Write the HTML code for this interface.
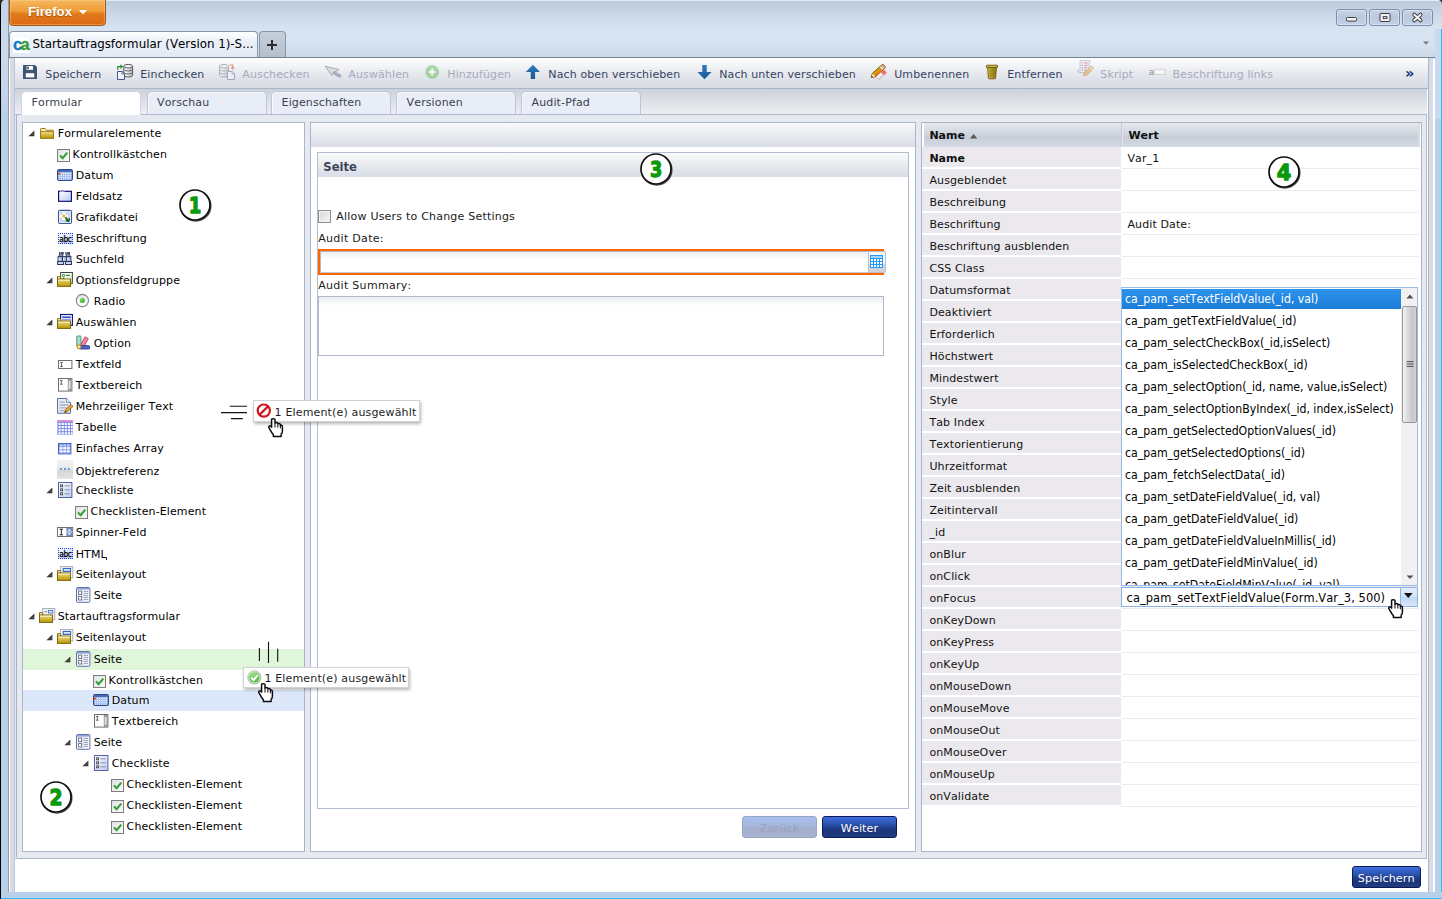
<!DOCTYPE html><html lang="de"><head><meta charset="utf-8"><title>Startauftragsformular (Version 1)</title><style>
*{box-sizing:border-box;margin:0;padding:0}
html,body{width:1442px;height:899px;overflow:hidden;background:#fff}
body{position:relative;font-family:"DejaVu Sans","Liberation Sans",sans-serif;font-size:11px;letter-spacing:.12px;font-kerning:none;color:#000;line-height:13px}
.a{position:absolute}
svg{display:block;overflow:visible}
/* window chrome */
#title{left:0;top:0;width:1442px;height:57px;background:linear-gradient(#e4e9f2 0,#e4e9f2 1px,#bccbdc 1px,#c2d0e0 7px,#d6e4f2 28px,#d6e4f2 44px,#cbd8e6 57px)}
#lb{left:0;top:0;width:9px;height:899px;background:linear-gradient(90deg,#000 0,#000 1.2px,#b9d0ea 1.2px,#b9d0ea 8.2px,#999 8.2px)}
#lbt{left:1px;top:0;width:7px;height:120px;background:linear-gradient(#c2d3e8,#cbdbee 45%,#b9d0ea)}
#rb{left:1434.7px;top:29px;width:7.3px;height:870px;background:linear-gradient(90deg,#b9d0ea 0,#b9d0ea 6.3px,#2bc0f0 6.3px)}
#rbt{left:1434.7px;top:29px;width:6.3px;height:90px;background:#c8daf0}
#bb{left:1.2px;top:891.8px;width:1441px;height:7.2px;background:linear-gradient(#b9d0ea 0,#b9d0ea 6px,#2bc0f0 6px)}
#ffbtn{left:9px;top:-1px;width:97px;height:26.5px;border:1px solid #a5561a;border-radius:0 0 4px 4px;background:linear-gradient(#f6b860 0,#ee9a35 45%,#e17a1c 55%,#dc6a16 100%);box-shadow:inset 0 0 0 1px rgba(255,220,160,.35)}
#fftxt{left:28px;top:3px;font-family:"Liberation Sans","DejaVu Sans",sans-serif;font-weight:bold;font-size:13.2px;line-height:18px;color:#fff;letter-spacing:0;text-shadow:0 1px 1px rgba(120,50,0,.6)}
#btab{left:9px;top:30.5px;width:249px;height:27.5px;border:1px solid #8a96a6;border-bottom:none;border-radius:4px 4px 0 0;background:linear-gradient(#fdfeff,#e9eff8 40%,#e3eaf5)}
#btabt{left:32.5px;top:36px;font-size:11.85px;line-height:16px;letter-spacing:0;white-space:pre;color:#000}
#ntab{left:258.7px;top:30.5px;width:27.3px;height:27px;border:1px solid #8a96a6;border-bottom:none;border-radius:4px 4px 0 0;background:linear-gradient(#c6d0dc,#b3becb)}
#tline{left:9px;top:57px;width:1426px;height:2px;background:linear-gradient(#79838f 0,#79838f 1px,#b9c1cc 1px)}
.wb{top:9px;height:17px;width:31px;border:1px solid #7f8dad;border-radius:3px;background:linear-gradient(#c6d3e4,#b9c8de 50%,#c4d2e6);box-shadow:inset 0 0 0 1px rgba(255,255,255,.35)}
/* page */
#page{left:8.8px;top:58px;width:1426px;height:834px;background:#fff}
#lstrip{left:10px;top:58px;width:4.8px;height:834px;background:linear-gradient(90deg,#d8dde8,#d3d9e5 80%,#aab4c8)}
#rstrip{left:1427.6px;top:58px;width:6.6px;height:834px;background:linear-gradient(90deg,#aeb6c6 0,#aeb6c6 .8px,#d5dbe6 .8px,#d8dde8 5.4px,#fff 5.4px,#fff 6px,#a4a4a4 6px)}
#tb{left:14.5px;top:58px;width:1413.5px;height:30.5px;background:linear-gradient(#fff 0,#f7f8fa 15%,#e9ebf0 45%,#dee1e8 75%,#d9dce4 100%);border-bottom:1px solid #a9b7cc}
.ti{top:68px;white-space:pre;color:#35435f;line-height:14px}
.ti.d{color:#a8aabd}
#ts{left:14.5px;top:89px;width:1412.5px;height:26px;background:linear-gradient(#cdd1da,#dcdfe6 45%,#e9ebef 90%,#eceef2);border-bottom:1px solid #aebacd}
.tab{top:91px;width:120px;height:23px;border:1px solid #bcc6d8;border-bottom:none;border-radius:5px 5px 0 0;background:#e9edf7;color:#3a3f4d;padding:4px 0 0 9.6px;line-height:14px;box-shadow:inset 1px 1px 0 #f6f8fc}
.tab.on{background:#fff;height:24px;border-color:#cfd6e3;box-shadow:none}
#main{left:14.5px;top:115px;width:1412.5px;height:743.5px;background:#e6e9ef;border-left:1.8px solid #dfe6f5;border-right:1px solid #b3bccb;border-bottom:1.5px solid #b0b6c0}
#mainl{left:16.3px;top:115px;width:.8px;height:742px;background:#a8b2c4}
.pnl{background:#fff;border:1px solid #a9b5c9}
.hd{background:linear-gradient(#fbfbfc,#e9ebf0 45%,#d9dde6);}

.tr{white-space:pre;line-height:23px;height:23px;color:#000;letter-spacing:.12px}
.fl{white-space:pre;line-height:14px;color:#1a1a1a}
.btn{border:1px solid #0b1c54;border-radius:3px;background:linear-gradient(#3c6ddc 0,#2f58b8 30%,#213f8c 55%,#1c3578 70%,#213c84 100%);color:#fff;text-align:center;line-height:23px;font-size:11.2px;letter-spacing:.1px}
.gh{font-weight:bold;line-height:14px;color:#111;font-size:11px;letter-spacing:0}
.gc{line-height:14px;white-space:pre;color:#111}
.gc.b{font-weight:bold;letter-spacing:0}
#dd{left:1121.4px;top:286.6px;width:296.6px;height:299px;border:1px solid #98bbea;background:#fff;overflow:hidden}
#dd>div{position:absolute}
.do{left:2.6px;height:22px;line-height:22px;white-space:pre;font-family:"DejaVu Sans Condensed","Liberation Sans","DejaVu Sans",sans-serif;font-size:12.2px;letter-spacing:0;color:#000}
.do.s{color:#fff}

.tip{background:#fff;border:1px solid #d2d2d2;box-shadow:1px 2px 3px rgba(0,0,0,.28)}
.tipt{white-space:pre;line-height:14px;color:#1d1d28;font-size:11px;letter-spacing:.16px}
</style></head><body>

<svg width="0" height="0" style="position:absolute">
<defs>
<linearGradient id="gFold" x1="0" y1="0" x2="0" y2="1"><stop offset="0" stop-color="#f3e7a4"/><stop offset=".35" stop-color="#dcc350"/><stop offset="1" stop-color="#b8960c"/></linearGradient>
<linearGradient id="gBlu" x1="0" y1="0" x2="1" y2="1"><stop offset="0" stop-color="#ffffff"/><stop offset="1" stop-color="#bccaf6"/></linearGradient>
<linearGradient id="gGry" x1="0" y1="0" x2="1" y2="1"><stop offset="0" stop-color="#dfe1e4"/><stop offset="1" stop-color="#fbfbfb"/></linearGradient>
<linearGradient id="gObj" x1="0" y1="0" x2="0" y2="1"><stop offset="0" stop-color="#f2f2f2"/><stop offset=".48" stop-color="#e9e9e9"/><stop offset=".52" stop-color="#d6d6d6"/><stop offset="1" stop-color="#e2e2e2"/></linearGradient>
<linearGradient id="gRad" x1="0" y1="0" x2="0" y2="1"><stop offset="0" stop-color="#e4e4e4"/><stop offset="1" stop-color="#ffffff"/></linearGradient>
<symbol id="arr" viewBox="0 0 7 7"><path d="M6.4 .5V6.2H.4Z" fill="#363636"/><path d="M5.3 3.6V5.1H3.7Z" fill="#6a6a6a"/></symbol>
<symbol id="folder" viewBox="0 0 17 21"><path d="M1.5 7.2Q1.5 6.5 2.2 6.5H6.2L7.5 8.2H13.8Q14.5 8.2 14.5 8.9V16.3H1.5Z" fill="#f6ecb4" stroke="#9c7d14" stroke-width="1"/><path d="M1.5 9.6H14.5V16.3H1.5Z" fill="url(#gFold)" stroke="#9c7d14" stroke-width="1"/></symbol>
<symbol id="fold2" viewBox="0 0 17 21"><path d="M.5 7.6H3.6V10.4H.5Z" fill="#f8f0c4" stroke="#8a7008"/><rect x=".5" y="10" width="13" height="7.4" fill="url(#gFold)" stroke="#7e6604"/><path d="M1.2 11.2H12.8" stroke="#fbf3c8" stroke-width="1"/></symbol>
<symbol id="chk" viewBox="0 0 17 21"><rect x=".5" y="6.5" width="12" height="12" fill="url(#gGry)" stroke="#7d7d7d"/><path d="M3 12.3L5.6 15.2L10.3 9.6" fill="none" stroke="#2e9e2e" stroke-width="2"/></symbol>
<symbol id="cal" viewBox="0 0 17 21"><rect x=".6" y="5.6" width="14.8" height="10.8" rx="1.6" fill="#a4bdf2" stroke="#2c4a8e" stroke-width="1.2"/><rect x="1.2" y="6" width="13.6" height="1.9" fill="#4464ae"/><g fill="#fff"><rect x="3.9" y="8.9" width="1.1" height="1.1"/><rect x="6.1" y="8.9" width="1.1" height="1.1"/><rect x="8.3" y="8.9" width="1.1" height="1.1"/><rect x="10.5" y="8.9" width="1.1" height="1.1"/><rect x="12.7" y="8.9" width="1.1" height="1.1"/><rect x="3.9" y="11" width="1.1" height="1.1"/><rect x="6.1" y="11" width="1.1" height="1.1"/><rect x="8.3" y="11" width="1.1" height="1.1"/><rect x="10.5" y="11" width="1.1" height="1.1"/><rect x="12.7" y="11" width="1.1" height="1.1"/><rect x="3.9" y="13.1" width="1.1" height="1.1"/><rect x="6.1" y="13.1" width="1.1" height="1.1"/><rect x="8.3" y="13.1" width="1.1" height="1.1"/><rect x="10.5" y="13.1" width="1.1" height="1.1"/><rect x="12.7" y="13.1" width="1.1" height="1.1"/><rect x="1.7" y="11" width="1.1" height="1.1"/><rect x="1.7" y="13.1" width="1.1" height="1.1"/><rect x="1.7" y="15" width="1.1" height=".8"/><rect x="3.9" y="15" width="1.1" height=".8"/><rect x="6.1" y="15" width="1.1" height=".8"/><rect x="8.3" y="15" width="1.1" height=".8"/><rect x="10.5" y="15" width="1.1" height=".8"/><rect x="12.7" y="15" width="1.1" height=".8"/></g><rect x="1" y="8.8" width="2.2" height="1.9" fill="#f0500e"/></symbol>
<symbol id="fset" viewBox="0 0 17 21"><rect x="1.6" y="6.3" width="12.8" height="10" fill="url(#gBlu)" stroke="#12127c" stroke-width="1.2"/><rect x="3" y="5.4" width="4.6" height="1.6" fill="#fff"/><path d="M3 6.6l.75-1 .75 1 .75-1 .75 1 .75-1 .75 1" fill="none" stroke="#12127c" stroke-width=".7"/></symbol>
<symbol id="img" viewBox="0 0 17 21"><rect x="1.5" y="4.4" width="13" height="13.1" rx="1.5" fill="#ccd4f0" stroke="#3c5a9a" stroke-width="1.1"/><rect x="2.6" y="5.5" width="10.8" height="10.9" fill="none" stroke="#eef1fb" stroke-width=".8"/><g fill="#fff"><circle cx="6.8" cy="7.5" r="1.6"/><circle cx="4.3" cy="10" r="1.6"/><circle cx="9.3" cy="10" r="1.6"/><circle cx="6.8" cy="12.5" r="1.6"/></g><circle cx="6.8" cy="9.9" r="1.5" fill="#f8bc08"/><path d="M8.4 11.2L11 14.6" stroke="#0d640d" stroke-width="1.7"/><path d="M8.8 14.6L11.6 15.4L12.6 12.2" fill="none" stroke="#0d640d" stroke-width="1.5"/></symbol>
<symbol id="lbl" viewBox="0 0 17 21"><rect x="1" y="6" width="15" height="11" fill="url(#gBlu)"/><path d="M1 6.5H16M1 16.5H16" stroke="#1446ff" stroke-dasharray="1 1"/><path d="M1.5 6V17M15.5 6V17" stroke="#1446ff" stroke-dasharray="1 1"/><text x="2.3" y="14.5" font-family="DejaVu Sans Condensed,DejaVu Sans,sans-serif" font-size="8.2" letter-spacing="-.35" fill="#000" stroke="#000" stroke-width=".25">abc</text></symbol>
<symbol id="bino" viewBox="0 0 17 21"><rect x="1.1" y="8.6" width="12.8" height="4.8" fill="#b9c8f0" stroke="#2c3558" stroke-width="1"/><path d="M5.4 8.6V13.4M9.4 8.6V13.4" stroke="#2c3558" stroke-width="1.1"/><path d="M3 5.8H5.8V8.6H1.6ZM9.2 5.8H12L13.4 8.6H9.2Z" fill="#8c9cd0" stroke="#2c3558" stroke-width=".9"/><rect x="2" y="4.2" width="4.8" height="1.7" fill="#2c3250"/><rect x="8.2" y="4.2" width="4.8" height="1.7" fill="#2c3250"/><rect x="3" y="4.6" width="1.2" height=".9" fill="#e8ecf8"/><rect x="9.2" y="4.6" width="1.2" height=".9" fill="#e8ecf8"/><rect x=".6" y="13.5" width="6" height="3" fill="#c6d4f6" stroke="#2c3558" stroke-width="1"/><rect x="8.5" y="13.5" width="6" height="3" fill="#c6d4f6" stroke="#2c3558" stroke-width="1"/><path d="M2.2 9.6V12.6M6.6 9.6V12.6M10.4 9.6V12.6" stroke="#e6ecfb" stroke-width="1"/></symbol>
<symbol id="optg" viewBox="0 0 17 21"><defs><linearGradient id="gGrn" x1="0" y1="0" x2="1" y2="1"><stop offset=".35" stop-color="#fff"/><stop offset="1" stop-color="#b8ecb0"/></linearGradient></defs><rect x="3.6" y="3.5" width="11.8" height="10.8" fill="url(#gGrn)" stroke="#444" stroke-width="1"/><circle cx="6.5" cy="6.4" r="1.15" fill="#fff" stroke="#1c7a1c" stroke-width="1"/><path d="M9 6.4H12.8" stroke="#1c7a1c" stroke-width="1.1"/><circle cx="6.5" cy="9.6" r="1.1" fill="#1c7a1c"/><use href="#fold2"/></symbol>
<symbol id="selg" viewBox="0 0 17 21"><rect x="3.6" y="3.5" width="11.8" height="10.8" fill="#fff" stroke="#15158c" stroke-width="1.2"/><rect x="5.2" y="5.4" width="8.6" height="1.8" fill="#3356c6"/><path d="M5.2 8.8H13.8" stroke="#5a6ac0" stroke-width=".9"/><use href="#fold2"/></symbol>
<symbol id="layg" viewBox="0 0 17 21"><rect x="3.6" y="3.5" width="12.2" height="11.4" fill="#fff" stroke="#aab0ba"/><rect x="6.2" y="5.4" width="7.4" height="3" fill="#d4e2fa" stroke="#2f62be" stroke-width="1.1"/><use href="#fold2"/></symbol>
<symbol id="formg" viewBox="0 0 17 21"><rect x="3.6" y="3.5" width="12.2" height="11.4" fill="#eef1f6" stroke="#aab0ba"/><rect x="5.4" y="6" width="2.6" height="1.2" fill="#8a96a6"/><rect x="9.4" y="5.4" width="4.4" height="2.6" fill="#dce8fb" stroke="#4a78c8" stroke-width=".9"/><use href="#fold2"/></symbol>
<symbol id="radio" viewBox="0 0 17 21"><circle cx="7.4" cy="10.5" r="6.1" fill="url(#gRad)" stroke="#848484" stroke-width="1.1"/><circle cx="7.4" cy="10.5" r="2.5" fill="#46bc3a"/><circle cx="6.8" cy="9.8" r="1" fill="#9be48e"/></symbol>
<symbol id="opt" viewBox="0 0 17 21"><path d="M1.8 4.6Q1.8 4 2.6 4H5.4Q6 4 6 4.8V14H1.8Z" fill="#a6e2c6" stroke="#4a8a72" stroke-width=".9"/><path d="M5 14.2L9.6 5.2Q10 4.6 10.8 5L12.8 6.2Q13.4 6.6 13 7.4L8.6 15.2Z" fill="#f282a2" stroke="#b04a6a" stroke-width=".9"/><path d="M4.6 13.6H13.6Q14.6 13.6 14.6 14.6V16Q14.6 17 13.6 17H4.6Z" fill="#4a68c6" stroke="#2a3f8e" stroke-width=".9"/><circle cx="4" cy="14.8" r="1.9" fill="#fbe9a8" stroke="#c8921a" stroke-width="1.1"/></symbol>
<symbol id="tfld" viewBox="0 0 17 21"><rect x="1.5" y="7.5" width="13.4" height="8" fill="#fff" stroke="#6f6f6f"/><path d="M3.2 9.4H5.8M4.5 9.4V13.6M3.2 13.6H5.8" stroke="#555" stroke-width=".9" fill="none"/></symbol>
<symbol id="tarea" viewBox="0 0 17 21"><rect x="1.5" y="4.5" width="13.4" height="12.6" fill="#fff" stroke="#6f6f6f"/><rect x="10.8" y="5" width="3.6" height="11.6" fill="#8e8e8e"/><rect x="11.6" y="6.6" width="2" height="8.4" fill="#e2e2e2"/><path d="M3 6.4H5.6M4.3 6.4V10.2M3 10.2H5.6" stroke="#555" stroke-width=".9" fill="none"/></symbol>
<symbol id="rich" viewBox="0 0 17 21"><path d="M.5 3.5H9.6L13.5 7.4V18.3H.5Z" fill="#e8ecf8" stroke="#5a70a2"/><path d="M9.6 3.5V7.4H13.5" fill="#fff" stroke="#5a70a2" stroke-width=".8"/><path d="M2.6 7.2H8M2.6 10H11.4M2.6 12.8H9.6M2.6 15.6H7" stroke="#a4acba" stroke-width="1.3"/><path d="M7.6 17.6L8.4 14.6L14 9.4L16 11.4L10.4 16.8Z" fill="#e8a23a" stroke="#8a5a12" stroke-width=".8"/><path d="M7.6 17.6L8.2 15.6L9.6 17Z" fill="#4a3a1a"/></symbol>
<symbol id="tbl" viewBox="0 0 17 21"><rect x=".3" y="4.2" width="15.6" height="14.4" fill="#7d8ce6"/><rect x=".3" y="4.2" width="15.6" height="1.5" fill="#f290d2"/><g fill="#fff"><rect x="1.6" y="6.9" width="2.1" height="2.1"/><rect x="4.7" y="6.9" width="2.1" height="2.1"/><rect x="7.8" y="6.9" width="2.1" height="2.1"/><rect x="10.9" y="6.9" width="2.1" height="2.1"/><rect x="14" y="6.9" width="1.6" height="2.1"/><rect x="1.6" y="10" width="2.1" height="2.1"/><rect x="4.7" y="10" width="2.1" height="2.1"/><rect x="7.8" y="10" width="2.1" height="2.1"/><rect x="10.9" y="10" width="2.1" height="2.1"/><rect x="14" y="10" width="1.6" height="2.1"/><rect x="1.6" y="13.1" width="2.1" height="2.1"/><rect x="4.7" y="13.1" width="2.1" height="2.1"/><rect x="7.8" y="13.1" width="2.1" height="2.1"/><rect x="10.9" y="13.1" width="2.1" height="2.1"/><rect x="14" y="13.1" width="1.6" height="2.1"/><rect x="1.6" y="16.2" width="2.1" height="1.8"/><rect x="4.7" y="16.2" width="2.1" height="1.8"/><rect x="7.8" y="16.2" width="2.1" height="1.8"/><rect x="10.9" y="16.2" width="2.1" height="1.8"/><rect x="14" y="16.2" width="1.6" height="1.8"/></g></symbol>
<symbol id="arry" viewBox="0 0 17 21"><rect x="1.5" y="6.5" width="12.4" height="10.4" fill="#9db4ee" stroke="#4466c0"/><rect x="2" y="7" width="11.4" height="2.2" fill="#5f82d8"/><g fill="#fff"><rect x="2.8" y="10.2" width="2.6" height="1.8"/><rect x="6.4" y="10.2" width="2.6" height="1.8"/><rect x="10" y="10.2" width="2.6" height="1.8"/><rect x="2.8" y="13.4" width="2.6" height="1.8"/><rect x="6.4" y="13.4" width="2.6" height="1.8"/><rect x="10" y="13.4" width="2.6" height="1.8"/><rect x="2.8" y="7.4" width="2.6" height="1.4" opacity=".8"/><rect x="6.4" y="7.4" width="2.6" height="1.4" opacity=".8"/><rect x="10" y="7.4" width="2.6" height="1.4" opacity=".8"/></g></symbol>
<symbol id="objr" viewBox="0 0 17 21"><rect x="0" y="2" width="16" height="18.8" fill="url(#gObj)"/><g fill="#2a80d2"><rect x="3.2" y="10.2" width="1.8" height="1.5"/><rect x="7" y="10.2" width="1.8" height="1.5"/><rect x="10.8" y="10.2" width="1.8" height="1.5"/></g></symbol>
<symbol id="clst" viewBox="0 0 17 21"><rect x="1.5" y="3.5" width="13.4" height="15" fill="url(#gBlu)" stroke="#5262a2"/><g fill="#fff" stroke="#444" stroke-width=".9"><rect x="3.6" y="5.8" width="2" height="2"/><rect x="3.6" y="9.8" width="2" height="2"/><rect x="3.6" y="13.8" width="2" height="2"/></g><path d="M7.6 6.8H12.8M7.6 10.8H12.8M7.6 14.8H12.8" stroke="#8a8f9c" stroke-width="1"/></symbol>
<symbol id="spin" viewBox="0 0 17 21"><rect x=".5" y="6.5" width="15.2" height="9" fill="#fff" stroke="#6f6f6f"/><rect x="9.4" y="7" width="5.8" height="8" fill="#6a88c8"/><path d="M9.4 11H15.2" stroke="#fff" stroke-width=".8"/><path d="M10.6 9.8L12.3 7.8L14 9.8ZM10.6 12.2L12.3 14.2L14 12.2Z" fill="#fff"/><path d="M2.6 8.2H6M4.3 8.2V13.8M2.6 13.8H6" stroke="#222" stroke-width="1" fill="none"/></symbol>
<symbol id="pgic" viewBox="0 0 17 21"><rect x="1.5" y="3.5" width="13.4" height="14.8" rx="1" fill="#f4f6fc" stroke="#6272aa"/><rect x="2" y="4" width="12.4" height="1.6" fill="#8fa2d6"/><g fill="#fff" stroke="#666c7c" stroke-width=".9"><rect x="3.6" y="7" width="3" height="3.6"/><rect x="3.6" y="12.4" width="3" height="3.6"/></g><path d="M8.8 7.4H13M8.8 9.4H13M8.8 11.4H13M8.8 13.4H13M8.8 15.4H13" stroke="#8e96aa" stroke-width=".9"/><path d="M8 5.6V18" stroke="#c2c8da" stroke-width=".7"/></symbol>
</defs></svg>

<div class="a" id="title"></div>
<div class="a" id="lb"></div><div class="a" id="lbt"></div>
<div class="a" id="rb"></div><div class="a" id="rbt"></div><div class="a" id="bb"></div>
<svg class="a" style="left:0;top:0" width="12" height="12"><path d="M0 0H4Q1.6 .8 1.2 4.5H0Z" fill="#2e2e28"/></svg>
<svg class="a" style="left:1428px;top:0" width="14" height="6"><path d="M11 0H14V3.4Q13.4 1 11 0Z" fill="#2e2e28"/></svg>
<div class="a" id="ffbtn"></div><div class="a" id="fftxt">Firefox</div>
<svg class="a" style="left:78.5px;top:10px" width="9" height="5"><path d="M0 0H8L4 4.6Z" fill="#fff"/></svg>
<div class="a wb" style="left:1336px"></div><div class="a wb" style="left:1369px"></div><div class="a wb" style="left:1402px"></div>
<svg class="a" style="left:1336px;top:9px" width="100" height="17"><rect x="10.5" y="8.5" width="10" height="3.6" rx="1" fill="#f2f2f2" stroke="#3c3c44" stroke-width="1"/><rect x="44" y="4.5" width="10" height="8" rx="1" fill="#f2f2f2" stroke="#3c3c44" stroke-width="1"/><rect x="47.2" y="7.6" width="3.8" height="2" fill="#cfd8e6" stroke="#3c3c44" stroke-width=".9"/><path d="M78.3 5.7L84.5 11.3M84.5 5.7L78.3 11.3" stroke="#3c3c46" stroke-width="4" stroke-linecap="round"/><path d="M78.3 5.7L84.5 11.3M84.5 5.7L78.3 11.3" stroke="#f3f3f3" stroke-width="2.1" stroke-linecap="round"/></svg>
<svg class="a" style="left:1423px;top:41.4px" width="7" height="5"><path d="M0 .5H6L3 3.8Z" fill="#777c86"/></svg>
<div class="a" id="btab"></div>
<div class="a" style="left:13px;top:37px;width:16px;height:16px;background:#fff"></div>
<div class="a" style="left:13px;top:34.6px;font-family:'Liberation Sans','DejaVu Sans',sans-serif;font-weight:bold;font-size:16.4px;line-height:18px;letter-spacing:-1.7px;-webkit-text-stroke:.35px currentColor"><span style="color:#0b7cc4">c</span><span style="color:#3b9b3b">a</span></div>
<div class="a" id="btabt">Startauftragsformular (Version 1)-S...</div>
<div class="a" id="ntab"></div>
<svg class="a" style="left:267px;top:40px" width="10" height="10"><path d="M5 0V10M0 5H10" stroke="#2c2c2c" stroke-width="2"/></svg>
<div class="a" id="page"></div><div class="a" id="tline"></div>
<div class="a" id="lstrip"></div><div class="a" id="rstrip"></div>
<div class="a" id="tb"></div>
<div class="a ti" style="left:45.3px">Speichern</div>
<div class="a ti" style="left:140.3px">Einchecken</div>
<div class="a ti d" style="left:242.3px">Auschecken</div>
<div class="a ti d" style="left:348.3px">Auswählen</div>
<div class="a ti d" style="left:447.3px">Hinzufügen</div>
<div class="a ti" style="left:548.3px">Nach oben verschieben</div>
<div class="a ti" style="left:719.2px">Nach unten verschieben</div>
<div class="a ti" style="left:894.2px">Umbenennen</div>
<div class="a ti" style="left:1007.3px">Entfernen</div>
<div class="a ti d" style="left:1100.3px">Skript</div>
<div class="a ti d" style="left:1172.6px">Beschriftung links</div>
<div class="a" style="left:1405px;top:63.6px;font-weight:bold;font-size:14.5px;line-height:18px;color:#12307e;letter-spacing:-.5px">»</div>

<svg class="a" style="left:14px;top:58px" width="1414" height="31">
<defs>
<linearGradient id="gDb" x1="0" y1="0" x2="1" y2="0"><stop offset="0" stop-color="#ffffff"/><stop offset=".45" stop-color="#e6e6e6"/><stop offset="1" stop-color="#b2b2b2"/></linearGradient>
<linearGradient id="gUp" x1="0" y1="0" x2="0" y2="1"><stop offset="0" stop-color="#2d7bbf"/><stop offset="1" stop-color="#1c5896"/></linearGradient>
<linearGradient id="gTr" x1="0" y1="0" x2="1" y2="0"><stop offset="0" stop-color="#d8c45a"/><stop offset=".5" stop-color="#b89e2a"/><stop offset="1" stop-color="#8e7612"/></linearGradient>
</defs>
<!-- save: x 23..37, y 65..79 => local 9..23 , 7..21 -->
<path d="M9.6 7H21L23 9V20.4Q23 21 22.4 21H9.6Q9 21 9 20.4V7.6Q9 7 9.6 7Z" fill="#3f5672"/>
<rect x="12.6" y="8" width="6.4" height="3.8" fill="#fff"/><rect x="13.4" y="8.6" width="1.3" height="2.4" fill="#222"/>
<rect x="11.8" y="15.2" width="8.4" height="4.2" fill="#fff"/>
<!-- einchecken: x 117..133,y 64..80 => local 103..119, 6..22 -->
<g>
<path d="M109.8 8.2V17.2Q109.8 19 114.2 19Q118.6 19 118.6 17.2V8.2Z" fill="url(#gDb)" stroke="#4c4c4c" stroke-width=".9"/>
<ellipse cx="114.2" cy="8.2" rx="4.4" ry="1.8" fill="#f4f4f4" stroke="#4c4c4c" stroke-width=".9"/>
<path d="M109.8 11.2Q109.8 13 114.2 13Q118.6 13 118.6 11.2M109.8 14.2Q109.8 16 114.2 16Q118.6 16 118.6 14.2" fill="none" stroke="#5e5e5e" stroke-width=".9"/>
<path d="M103.5 13.5H108.2L110.5 15.8V21.5H103.5Z" fill="#f3f5fb" stroke="#44568e" stroke-width="1"/><path d="M108 13.6V16H110.4" fill="none" stroke="#44568e" stroke-width=".8"/>
<path d="M103.8 11.8V8.6H106.8" fill="none" stroke="#1d8a2e" stroke-width="1.2"/><path d="M106.4 6.3L109 8.6L106.4 10.9Z" fill="#1d8a2e"/>
</g>
<!-- auschecken (faded): x219..235 => local 205..221 -->
<g opacity=".5">
<path d="M205.6 8.2V17.2Q205.6 19 210 19Q214.4 19 214.4 17.2V8.2Z" fill="url(#gDb)" stroke="#5c5c5c" stroke-width=".9"/>
<ellipse cx="210" cy="8.2" rx="4.4" ry="1.8" fill="#f4f4f4" stroke="#5c5c5c" stroke-width=".9"/>
<path d="M205.6 11.2Q205.6 13 210 13Q214.4 13 214.4 11.2M205.6 14.2Q205.6 16 210 16Q214.4 16 214.4 14.2" fill="none" stroke="#6e6e6e" stroke-width=".9"/>
<path d="M213.5 13.5H218.2L220.6 15.8V21.5H213.5Z" fill="#f6f7fb" stroke="#5a6a96" stroke-width="1"/><path d="M218 13.6V16H220.4" fill="none" stroke="#5a6a96" stroke-width=".8"/>
<path d="M215.4 7H218.6V9.8" fill="none" stroke="#c8321e" stroke-width="1.2"/><path d="M216.3 9.2L218.6 11.8L220.9 9.2Z" fill="#c8321e"/>
</g>
<!-- auswählen pointer (faded): x325..341,y66..77 => local 311..327, 8..19 -->
<g opacity=".75">
<path d="M311.2 8.2L325 11.6L320.8 14L317.6 17.4Z" fill="#d4d7dd" stroke="#8a8e98" stroke-width=".9" stroke-linejoin="round"/>
<path d="M320 13.4L326.6 17Q327.6 17.8 326.8 18.8Q326 19.6 325 19L318.6 15.2Z" fill="#8ea2c6" stroke="#7e8698" stroke-width=".8" stroke-linejoin="round"/>
</g>
<!-- hinzufügen: center 432,72 => local 418,14 -->
<g opacity=".5"><circle cx="418.2" cy="14" r="6.6" fill="#6cbf5e" stroke="#8fd083" stroke-width="1.2"/><circle cx="418.2" cy="14" r="5.2" fill="none" stroke="#4aa63e" stroke-width=".8"/><path d="M418.2 10.6V17.4M414.8 14H421.6" stroke="#fff" stroke-width="2.2"/></g>
<!-- up arrow: x525.8..540,y64.8..79 => local 511.8..526, 6.8..21 -->
<path d="M518.9 6.8L526 14H521.1V21H516.7V14H511.8Z" fill="url(#gUp)"/>
<!-- down arrow: x697..712 => local 683..698 -->
<path d="M690.5 21.2L697.6 14H692.7V7H688.3V14H683.4Z" fill="url(#gUp)"/>
<!-- umbenennen: x871..886,y64..80 => local 857..872, 6..22 -->
<g>
<g transform="rotate(-42 867.4 16.6)"><rect x="862" y="14.2" width="10.8" height="4.8" rx="1.2" fill="#fbeeee" stroke="#c9b6b4" stroke-width=".6"/><rect x="868.6" y="14.4" width="4" height="4.4" rx="1" fill="#e8776c"/><rect x="862.4" y="17.4" width="6" height="1.2" fill="#b9b6c4" opacity=".7"/></g>
<g transform="rotate(-42 863.8 13.5)"><path d="M855 13.5L858.4 11.3H871.4Q872.6 11.3 872.6 12.5V14.5Q872.6 15.7 871.4 15.7H858.4Z" fill="#d2aa06" stroke="#6e3a06" stroke-width=".8" stroke-linejoin="round"/><path d="M858.4 13.6H871.6Q872.4 13.6 872.4 14.4Q872.4 15.5 871.4 15.5H858.4L855.4 13.6Z" fill="#f27c12"/><rect x="868.2" y="11.6" width="1.8" height="3.8" fill="#cfe6f6"/><rect x="870" y="11.6" width="2.3" height="3.8" rx=".8" fill="#f0a0a0"/><path d="M855 13.5L858.4 11.6V15.4Z" fill="#fdf2d8"/><path d="M855 13.5L856.5 12.6V14.4Z" fill="#140a02"/></g>
</g>
<!-- trash: x986..998,y65..78.8 => local 972..984, 7..20.8 -->
<g>
<path d="M973.6 9.4H982.4L981.6 20.2Q981.5 20.8 980.8 20.8H975.2Q974.5 20.8 974.4 20.2Z" fill="url(#gTr)" stroke="#6e5a0c" stroke-width=".9"/>
<rect x="972.4" y="7.2" width="11.2" height="2.4" rx=".6" fill="#c8b23e" stroke="#6e5a0c" stroke-width=".9"/>
<path d="M976.2 10.6V19.4M978 10.6V19.4M979.8 10.6V19.4" stroke="#8a7418" stroke-width=".7"/>
</g>
<!-- skript (faded): x1077..1093.3,y60..76.2 => local 1063..1079.3, 2..18.2 -->
<g opacity=".55">
<path d="M1066 2.6H1076.4Q1075.2 4 1075.2 5.4V14.6H1064.8Q1063.2 14 1063.6 12.6H1066Z" fill="#dfe2f6" stroke="#8a92c2" stroke-width=".8"/>
<path d="M1067.8 5H1069M1070.4 5H1073.6M1067.8 7.4H1069M1070.4 7.4H1073.6M1067.8 9.8H1069M1070.4 9.8H1073M1067.8 12.2H1069M1070.4 12.2H1072" stroke="#c8463a" stroke-width="1"/>
<path d="M1069.6 17.6L1070.4 14.6L1076.6 8.6Q1077.4 8 1078.2 8.8L1079 9.8Q1079.6 10.6 1078.8 11.4L1072.6 17Z" fill="#f0a63a" stroke="#a8681a" stroke-width=".8"/>
<path d="M1076 9.4L1078.2 11.8" stroke="#f4d8d8" stroke-width="1.4"/>
</g>
<!-- a[] : a x1149..1152.5, rect x1154..1165 y69..74.6 => local 1135.. , 11..16.6 -->
<text x="1134.8" y="16.6" font-family="DejaVu Sans,sans-serif" font-size="8.6" fill="#8c8c8c">a</text>
<rect x="1140.4" y="11.3" width="10.6" height="5.2" fill="#f6f6f6" stroke="#cfcfcf" stroke-width=".9"/>
</svg>

<div class="a" id="ts"></div>
<div class="a tab on" style="left:21px">Formular</div>
<div class="a tab" style="left:146.5px">Vorschau</div>
<div class="a tab" style="left:271px">Eigenschaften</div>
<div class="a tab" style="left:396px">Versionen</div>
<div class="a tab" style="left:521px">Audit-Pfad</div>
<div class="a" id="main"></div><div class="a" id="mainl"></div>
<div class="a pnl" style="left:22px;top:122px;width:283px;height:730px"></div>
<div class="a" style="left:23px;top:649px;width:281px;height:21px;background:#dff6da"></div>
<div class="a" style="left:23px;top:690px;width:281px;height:20.5px;background:#dce8fa"></div>
<svg class="a" style="left:27.7px;top:130.2px" width="7" height="7"><use href="#arr"/></svg>
<svg class="a" style="left:39px;top:122px" width="17" height="21"><use href="#folder"/></svg>
<div class="a tr" style="left:57.7px;top:122px">Formularelemente</div>
<svg class="a" style="left:57px;top:143px" width="17" height="21"><use href="#chk"/></svg>
<div class="a tr" style="left:72.6px;top:143px">Kontrollkästchen</div>
<svg class="a" style="left:57px;top:164px" width="17" height="21"><use href="#cal"/></svg>
<div class="a tr" style="left:75.7px;top:164px">Datum</div>
<svg class="a" style="left:57px;top:185px" width="17" height="21"><use href="#fset"/></svg>
<div class="a tr" style="left:75.7px;top:185px">Feldsatz</div>
<svg class="a" style="left:57px;top:206px" width="17" height="21"><use href="#img"/></svg>
<div class="a tr" style="left:75.7px;top:206px">Grafikdatei</div>
<svg class="a" style="left:57px;top:227px" width="17" height="21"><use href="#lbl"/></svg>
<div class="a tr" style="left:75.7px;top:227px">Beschriftung</div>
<svg class="a" style="left:57px;top:248px" width="17" height="21"><use href="#bino"/></svg>
<div class="a tr" style="left:75.7px;top:248px">Suchfeld</div>
<svg class="a" style="left:45.7px;top:277.2px" width="7" height="7"><use href="#arr"/></svg>
<svg class="a" style="left:57px;top:269px" width="17" height="21"><use href="#optg"/></svg>
<div class="a tr" style="left:75.7px;top:269px">Optionsfeldgruppe</div>
<svg class="a" style="left:75px;top:290px" width="17" height="21"><use href="#radio"/></svg>
<div class="a tr" style="left:93.7px;top:290px">Radio</div>
<svg class="a" style="left:45.7px;top:319.2px" width="7" height="7"><use href="#arr"/></svg>
<svg class="a" style="left:57px;top:311px" width="17" height="21"><use href="#selg"/></svg>
<div class="a tr" style="left:75.7px;top:311px">Auswählen</div>
<svg class="a" style="left:75px;top:332px" width="17" height="21"><use href="#opt"/></svg>
<div class="a tr" style="left:93.7px;top:332px">Option</div>
<svg class="a" style="left:57px;top:353px" width="17" height="21"><use href="#tfld"/></svg>
<div class="a tr" style="left:75.7px;top:353px">Textfeld</div>
<svg class="a" style="left:57px;top:374px" width="17" height="21"><use href="#tarea"/></svg>
<div class="a tr" style="left:75.7px;top:374px">Textbereich</div>
<svg class="a" style="left:57px;top:395px" width="17" height="21"><use href="#rich"/></svg>
<div class="a tr" style="left:75.7px;top:395px">Mehrzeiliger Text</div>
<svg class="a" style="left:57px;top:416px" width="17" height="21"><use href="#tbl"/></svg>
<div class="a tr" style="left:75.7px;top:416px">Tabelle</div>
<svg class="a" style="left:57px;top:437px" width="17" height="21"><use href="#arry"/></svg>
<div class="a tr" style="left:75.7px;top:437px">Einfaches Array</div>
<svg class="a" style="left:57px;top:458px" width="17" height="21"><use href="#objr"/></svg>
<div class="a tr" style="left:75.7px;top:459.5px">Objektreferenz</div>
<svg class="a" style="left:45.7px;top:487.2px" width="7" height="7"><use href="#arr"/></svg>
<svg class="a" style="left:57px;top:479px" width="17" height="21"><use href="#clst"/></svg>
<div class="a tr" style="left:75.7px;top:479px">Checkliste</div>
<svg class="a" style="left:75px;top:500px" width="17" height="21"><use href="#chk"/></svg>
<div class="a tr" style="left:90.6px;top:500px">Checklisten-Element</div>
<svg class="a" style="left:57px;top:521px" width="17" height="21"><use href="#spin"/></svg>
<div class="a tr" style="left:75.7px;top:521px">Spinner-Feld</div>
<svg class="a" style="left:57px;top:542px" width="17" height="21"><use href="#lbl"/></svg>
<div class="a tr" style="left:75.7px;top:542.8px">HTML</div>
<svg class="a" style="left:45.7px;top:571.2px" width="7" height="7"><use href="#arr"/></svg>
<svg class="a" style="left:57px;top:563px" width="17" height="21"><use href="#layg"/></svg>
<div class="a tr" style="left:75.7px;top:563px">Seitenlayout</div>
<svg class="a" style="left:75px;top:584px" width="17" height="21"><use href="#pgic"/></svg>
<div class="a tr" style="left:93.7px;top:584px">Seite</div>
<svg class="a" style="left:27.7px;top:613.2px" width="7" height="7"><use href="#arr"/></svg>
<svg class="a" style="left:39px;top:605px" width="17" height="21"><use href="#formg"/></svg>
<div class="a tr" style="left:57.7px;top:605px">Startauftragsformular</div>
<svg class="a" style="left:45.7px;top:634.2px" width="7" height="7"><use href="#arr"/></svg>
<svg class="a" style="left:57px;top:626px" width="17" height="21"><use href="#layg"/></svg>
<div class="a tr" style="left:75.7px;top:626px">Seitenlayout</div>
<svg class="a" style="left:63.7px;top:656.2px" width="7" height="7"><use href="#arr"/></svg>
<svg class="a" style="left:75px;top:648px" width="17" height="21"><use href="#pgic"/></svg>
<div class="a tr" style="left:93.7px;top:648px">Seite</div>
<svg class="a" style="left:93px;top:669px" width="17" height="21"><use href="#chk"/></svg>
<div class="a tr" style="left:108.6px;top:669px">Kontrollkästchen</div>
<svg class="a" style="left:93px;top:689px" width="17" height="21"><use href="#cal"/></svg>
<div class="a tr" style="left:111.7px;top:689px">Datum</div>
<svg class="a" style="left:93px;top:710px" width="17" height="21"><use href="#tarea"/></svg>
<div class="a tr" style="left:111.7px;top:710px">Textbereich</div>
<svg class="a" style="left:63.7px;top:739.2px" width="7" height="7"><use href="#arr"/></svg>
<svg class="a" style="left:75px;top:731px" width="17" height="21"><use href="#pgic"/></svg>
<div class="a tr" style="left:93.7px;top:731px">Seite</div>
<svg class="a" style="left:81.7px;top:760.2px" width="7" height="7"><use href="#arr"/></svg>
<svg class="a" style="left:93px;top:752px" width="17" height="21"><use href="#clst"/></svg>
<div class="a tr" style="left:111.7px;top:752px">Checkliste</div>
<svg class="a" style="left:111px;top:773px" width="17" height="21"><use href="#chk"/></svg>
<div class="a tr" style="left:126.6px;top:773px">Checklisten-Element</div>
<svg class="a" style="left:111px;top:794px" width="17" height="21"><use href="#chk"/></svg>
<div class="a tr" style="left:126.6px;top:794px">Checklisten-Element</div>
<svg class="a" style="left:111px;top:815px" width="17" height="21"><use href="#chk"/></svg>
<div class="a tr" style="left:126.6px;top:815px">Checklisten-Element</div>
<div class="a" style="left:106px;top:558px;width:1.3px;height:1.5px;background:#222"></div>
<div class="a pnl" style="left:310px;top:122px;width:606px;height:730px"></div>
<div class="a hd" style="left:311px;top:123px;width:604px;height:24px"></div>
<div class="a pnl" style="left:317px;top:152px;width:592px;height:657px;border-color:#b2bdd0"></div>
<div class="a hd" style="left:318px;top:153px;width:590px;height:24px"></div>
<div class="a" style="left:323.3px;top:160px;font-weight:bold;font-size:11.6px;color:#3c4658;line-height:14px;letter-spacing:0">Seite</div>
<div class="a" style="left:318.3px;top:210.3px;width:12.6px;height:12.6px;border:1px solid #8e8f8f;background:linear-gradient(135deg,#d6d9dc,#f6f6f6);box-shadow:inset 0 0 0 1px #f4f4f4"></div>
<div class="a fl" style="left:336.3px;top:210px;letter-spacing:.21px">Allow Users to Change Settings</div>
<div class="a fl" style="left:318.2px;top:232px;letter-spacing:.3px">Audit Date:</div>
<div class="a" style="left:318px;top:249px;width:566px;height:26px;border:2px solid #ff6600;background:linear-gradient(#e9edf0,#fff 9px)"><div style="border:1px solid #aeb8c8;border-bottom-color:#c4ccd8;height:100%"></div></div>
<div class="a" style="left:868px;top:251px;width:18px;height:22px;background:linear-gradient(#fcfcfd,#f1f2f5 60%,#d6d8dd 62%,#d2d4da);border:1px solid #b9bec8;border-radius:0 2px 2px 0"></div>
<svg class="a" style="left:870px;top:255px" width="13" height="13"><rect x="0" y="0" width="13" height="13" fill="#219bfb"/><rect x="1" y="1" width="11" height="2" fill="#a4d6fb"/><g fill="#fff"><rect x="1" y="4" width="2" height="2"/><rect x="4" y="4" width="2" height="2"/><rect x="7" y="4" width="2" height="2"/><rect x="10" y="4" width="2" height="2"/><rect x="1" y="7" width="2" height="2"/><rect x="4" y="7" width="2" height="2"/><rect x="7" y="7" width="2" height="2"/><rect x="10" y="7" width="2" height="2"/><rect x="1" y="10" width="2" height="2"/><rect x="4" y="10" width="2" height="2"/><rect x="7" y="10" width="2" height="2"/><rect x="10" y="10" width="2" height="2"/></g></svg>
<div class="a fl" style="left:318.2px;top:279px;letter-spacing:.3px">Audit Summary:</div>
<div class="a" style="left:318px;top:296px;width:566px;height:59.5px;border:1px solid #b1b9c9;background:linear-gradient(#ebeef1,#fff 9px)"></div>
<div class="a btn" style="left:742px;top:816px;width:75px;height:22px;border-color:#98a6c4;background:linear-gradient(#a9c0f1,#a6b6dc 45%,#a3afcb 55%,#a5b2d0);color:#9aa4be">Zurück</div>
<div class="a btn" style="left:822px;top:816px;width:75px;height:22px">Weiter</div>
<div class="a pnl" style="left:921px;top:122px;width:500.5px;height:730px"></div>
<div class="a" style="left:923.6px;top:123px;width:1496.5px;max-width:496.5px;height:23.6px;background:linear-gradient(#e6e9ee,#cfd5de 45%,#c8ced9 60%,#d5dae3)"></div>
<div class="a" style="left:1121px;top:123px;width:1.6px;height:23.6px;background:linear-gradient(90deg,#b8c0cc,#eef0f4)"></div>
<div class="a" style="left:1418px;top:123px;width:2.4px;height:23.6px;background:#d9dbdf"></div>
<div class="a gh" style="left:929.4px;top:129px">Name</div><div class="a gh" style="left:1128.4px;top:129px">Wert</div>
<svg class="a" style="left:970px;top:133.8px" width="8" height="5"><path d="M0 4.4L3.6 0L7.2 4.4Z" fill="#555"/></svg>
<div class="a" style="left:922px;top:147px;width:199px;height:660px;background:repeating-linear-gradient(#ebe9ed 0,#ebe9ed 20.4px,#fff 20.4px,#fff 22px)"></div>
<div class="a" style="left:1121px;top:147px;width:297.6px;height:660px;background:repeating-linear-gradient(#fff 0,#fff 20.6px,#ececec 20.6px,#ececec 21.6px,#fff 21.6px,#fff 22px)"></div>
<div class="a gc b" style="left:929.4px;top:152px">Name</div>
<div class="a gc" style="left:1127.4px;top:152px">Var_1</div>
<div class="a gc" style="left:929.4px;top:174px">Ausgeblendet</div>
<div class="a gc" style="left:929.4px;top:196px">Beschreibung</div>
<div class="a gc" style="left:929.4px;top:218px">Beschriftung</div>
<div class="a gc" style="left:1127.4px;top:218px">Audit Date:</div>
<div class="a gc" style="left:929.4px;top:240px">Beschriftung ausblenden</div>
<div class="a gc" style="left:929.4px;top:262px">CSS Class</div>
<div class="a gc" style="left:929.4px;top:284px">Datumsformat</div>
<div class="a gc" style="left:929.4px;top:306px">Deaktiviert</div>
<div class="a gc" style="left:929.4px;top:328px">Erforderlich</div>
<div class="a gc" style="left:929.4px;top:350px">Höchstwert</div>
<div class="a gc" style="left:929.4px;top:372px">Mindestwert</div>
<div class="a gc" style="left:929.4px;top:394px">Style</div>
<div class="a gc" style="left:929.4px;top:416px">Tab Index</div>
<div class="a gc" style="left:929.4px;top:438px">Textorientierung</div>
<div class="a gc" style="left:929.4px;top:460px">Uhrzeitformat</div>
<div class="a gc" style="left:929.4px;top:482px">Zeit ausblenden</div>
<div class="a gc" style="left:929.4px;top:504px">Zeitintervall</div>
<div class="a gc" style="left:929.4px;top:526px">_id</div>
<div class="a gc" style="left:929.4px;top:548px">onBlur</div>
<div class="a gc" style="left:929.4px;top:570px">onClick</div>
<div class="a gc" style="left:929.4px;top:592px">onFocus</div>
<div class="a gc" style="left:929.4px;top:614px">onKeyDown</div>
<div class="a gc" style="left:929.4px;top:636px">onKeyPress</div>
<div class="a gc" style="left:929.4px;top:658px">onKeyUp</div>
<div class="a gc" style="left:929.4px;top:680px">onMouseDown</div>
<div class="a gc" style="left:929.4px;top:702px">onMouseMove</div>
<div class="a gc" style="left:929.4px;top:724px">onMouseOut</div>
<div class="a gc" style="left:929.4px;top:746px">onMouseOver</div>
<div class="a gc" style="left:929.4px;top:768px">onMouseUp</div>
<div class="a gc" style="left:929.4px;top:790px">onValidate</div>
<div class="a" id="dd">
<div class="a" style="left:0;top:1px;width:278.6px;height:20.6px;background:linear-gradient(#2d93ec,#1b7cd8)"></div>
<div class="a do s" style="top:0px">ca_pam_setTextFieldValue(_id, val)</div>
<div class="a do" style="top:22px">ca_pam_getTextFieldValue(_id)</div>
<div class="a do" style="top:44px">ca_pam_selectCheckBox(_id,isSelect)</div>
<div class="a do" style="top:66px">ca_pam_isSelectedCheckBox(_id)</div>
<div class="a do" style="top:88px">ca_pam_selectOption(_id, name, value,isSelect)</div>
<div class="a do" style="top:110px">ca_pam_selectOptionByIndex(_id, index,isSelect)</div>
<div class="a do" style="top:132px">ca_pam_getSelectedOptionValues(_id)</div>
<div class="a do" style="top:154px">ca_pam_getSelectedOptions(_id)</div>
<div class="a do" style="top:176px">ca_pam_fetchSelectData(_id)</div>
<div class="a do" style="top:198px">ca_pam_setDateFieldValue(_id, val)</div>
<div class="a do" style="top:220px">ca_pam_getDateFieldValue(_id)</div>
<div class="a do" style="top:242px">ca_pam_getDateFieldValueInMillis(_id)</div>
<div class="a do" style="top:264px">ca_pam_getDateFieldMinValue(_id)</div>
<div class="a do" style="top:286px">ca_pam_setDateFieldMinValue(_id, val)</div>
<div class="a" style="left:278.6px;top:0;width:17px;height:297px;background:#f1f1f1"></div>
<div class="a" style="left:280px;top:18px;width:14.4px;height:117.4px;border:1px solid #979797;border-radius:2px;background:linear-gradient(90deg,#f3f3f3,#dcdcdc 35%,#c6c6c6 75%,#d4d4d4)"></div>
<svg class="a" style="left:278.6px;top:0" width="17" height="297"><path d="M5.4 10.4L8.9 6.6L12.4 10.4Z M5.6 287.4L9 291L12.4 287.4Z" fill="#505050"/><path d="M5.6 73.6H12.4M5.6 76H12.4M5.6 78.4H12.4" stroke="#4e4e4e" stroke-width="1"/></svg>
</div>
<div class="a" style="left:1121.4px;top:587px;width:296.2px;height:19.8px;border:1px solid #8bb0e4;background:#fff"></div>
<div class="a" style="left:1400.3px;top:588px;width:16.3px;height:17.8px;border-left:1px solid #8bb0e4;background:linear-gradient(#e6effb,#cfe0f6 50%,#c2d7f3 52%,#d8e6f8)"></div>
<svg class="a" style="left:1404.4px;top:593.2px" width="9" height="6"><path d="M0 0H8.6L4.3 5Z" fill="#111"/></svg>
<div class="a" style="left:1126.6px;top:590.6px;font-size:11.45px;line-height:14px;letter-spacing:.06px;white-space:pre">ca_pam_setTextFieldValue(Form.Var_3, 500)</div>
<div class="a btn" style="left:1351.5px;top:866.4px;width:69.5px;height:21.8px">Speichern</div>
<svg class="a" style="left:175.4px;top:184.5px" width="40" height="40"><circle cx="20.8" cy="20.9" r="15" fill="none" stroke="#2a2a2a" stroke-width="1.5" opacity=".85"/><circle cx="20" cy="20" r="15" fill="#fff" stroke="#111" stroke-width="1.7"/><text transform="translate(20 28.2) scale(0.82 1)" x="0" y="0" text-anchor="middle" font-family="DejaVu Sans,sans-serif" font-weight="bold" font-size="22" fill="#0a990a" stroke="#0a990a" stroke-width="1.3" stroke-linejoin="round" letter-spacing="0">1</text></svg><svg class="a" style="left:36.4px;top:777.4px" width="40" height="40"><circle cx="20.8" cy="20.9" r="15" fill="none" stroke="#2a2a2a" stroke-width="1.5" opacity=".85"/><circle cx="20" cy="20" r="15" fill="#fff" stroke="#111" stroke-width="1.7"/><text transform="translate(20 28.2) scale(0.85 1)" x="0" y="0" text-anchor="middle" font-family="DejaVu Sans,sans-serif" font-weight="bold" font-size="22" fill="#0a990a" stroke="#0a990a" stroke-width="1.3" stroke-linejoin="round" letter-spacing="0">2</text></svg><svg class="a" style="left:636.2px;top:148.6px" width="40" height="40"><circle cx="20.8" cy="20.9" r="15" fill="none" stroke="#2a2a2a" stroke-width="1.5" opacity=".85"/><circle cx="20" cy="20" r="15" fill="#fff" stroke="#111" stroke-width="1.7"/><text transform="translate(20 28.2) scale(0.8 1)" x="0" y="0" text-anchor="middle" font-family="DejaVu Sans,sans-serif" font-weight="bold" font-size="22" fill="#0a990a" stroke="#0a990a" stroke-width="1.3" stroke-linejoin="round" letter-spacing="0">3</text></svg><svg class="a" style="left:1263.5px;top:152.2px" width="40" height="40"><circle cx="20.8" cy="20.9" r="15" fill="none" stroke="#2a2a2a" stroke-width="1.5" opacity=".85"/><circle cx="20" cy="20" r="15" fill="#fff" stroke="#111" stroke-width="1.7"/><text transform="translate(20 28.2) scale(0.95 1)" x="0" y="0" text-anchor="middle" font-family="DejaVu Sans,sans-serif" font-weight="bold" font-size="22" fill="#0a990a" stroke="#0a990a" stroke-width="1.3" stroke-linejoin="round" letter-spacing="0">4</text></svg><svg class="a" style="left:215px;top:400px" width="40" height="25"><path d="M14.8 6.2H32M6 12.6H32M16 18.6H27.8" stroke="#111" stroke-width="1.1"/></svg><svg class="a" style="left:250px;top:638px" width="40" height="30"><path d="M9.4 10V23M18.5 3.8V25M27.7 10.8V23.7" stroke="#111" stroke-width="1.1"/></svg><div class="a tip" style="left:253.2px;top:400.4px;width:166.4px;height:21.8px"></div><svg class="a" style="left:256px;top:403.4px" width="16" height="16"><circle cx="7.8" cy="7.6" r="6.1" fill="#fff" stroke="#d0141c" stroke-width="2.2"/><path d="M3.6 11.8L12 3.4" stroke="#d0141c" stroke-width="2.2"/></svg><div class="a tipt" style="left:274.6px;top:405.5px">1 Element(e) ausgewählt</div><svg class="a" style="left:268px;top:418.4px" width="16" height="20" viewBox="0 0 16 20"><path d="M3.6 1.6Q3.6 .7 5.3 .7Q7 .7 7 1.6V5.2Q8.4 3.9 9.8 5.2V6Q11.2 5 12.4 6.4V7.4Q13.7 6.6 14.4 8.2V13Q14.4 15.4 13.1 16.8V18.4H5.4V16.8Q3.6 14.6 2.6 12.6L.9 9.7Q.3 8.3 1.5 7.9Q2.6 7.6 3.6 9.2Z" fill="#fff" stroke="#0c0c10" stroke-width="1.5" stroke-linejoin="round"/><path d="M7 5.4V9.6M9.8 6.4V9.6M12.4 7.6V10.2" stroke="#16161c" stroke-width="1.1"/><path d="M12.6 14.5V16.6" stroke="#9a9a9a" stroke-width=".8"/></svg><div class="a tip" style="left:243.3px;top:666.7px;width:165.8px;height:21.5px;background:rgba(255,255,255,.93)"></div><svg class="a" style="left:246.6px;top:669.8px" width="16" height="16"><defs><radialGradient id="gOk" cx=".4" cy=".3" r=".8"><stop offset="0" stop-color="#9adf84"/><stop offset="1" stop-color="#3ea536"/></radialGradient></defs><circle cx="7.4" cy="7.4" r="6.7" fill="url(#gOk)" stroke="#c8c8c8" stroke-width="1"/><circle cx="7.4" cy="7.4" r="5.6" fill="none" stroke="#e6f6e0" stroke-width=".9"/><path d="M4.2 7.6L6.6 10L10.8 5.2" fill="none" stroke="#fff" stroke-width="1.9"/></svg><div class="a tipt" style="left:264.4px;top:672px">1 Element(e) ausgewählt</div><svg class="a" style="left:258px;top:682.8px" width="16" height="20" viewBox="0 0 16 20"><path d="M3.6 1.6Q3.6 .7 5.3 .7Q7 .7 7 1.6V5.2Q8.4 3.9 9.8 5.2V6Q11.2 5 12.4 6.4V7.4Q13.7 6.6 14.4 8.2V13Q14.4 15.4 13.1 16.8V18.4H5.4V16.8Q3.6 14.6 2.6 12.6L.9 9.7Q.3 8.3 1.5 7.9Q2.6 7.6 3.6 9.2Z" fill="#fff" stroke="#0c0c10" stroke-width="1.5" stroke-linejoin="round"/><path d="M7 5.4V9.6M9.8 6.4V9.6M12.4 7.6V10.2" stroke="#16161c" stroke-width="1.1"/><path d="M12.6 14.5V16.6" stroke="#9a9a9a" stroke-width=".8"/></svg><svg class="a" style="left:1388.2px;top:598.6px" width="16" height="20" viewBox="0 0 16 20"><path d="M3.6 1.6Q3.6 .7 5.3 .7Q7 .7 7 1.6V5.2Q8.4 3.9 9.8 5.2V6Q11.2 5 12.4 6.4V7.4Q13.7 6.6 14.4 8.2V13Q14.4 15.4 13.1 16.8V18.4H5.4V16.8Q3.6 14.6 2.6 12.6L.9 9.7Q.3 8.3 1.5 7.9Q2.6 7.6 3.6 9.2Z" fill="#fff" stroke="#0c0c10" stroke-width="1.5" stroke-linejoin="round"/><path d="M7 5.4V9.6M9.8 6.4V9.6M12.4 7.6V10.2" stroke="#16161c" stroke-width="1.1"/><path d="M12.6 14.5V16.6" stroke="#9a9a9a" stroke-width=".8"/></svg>
</body></html>
